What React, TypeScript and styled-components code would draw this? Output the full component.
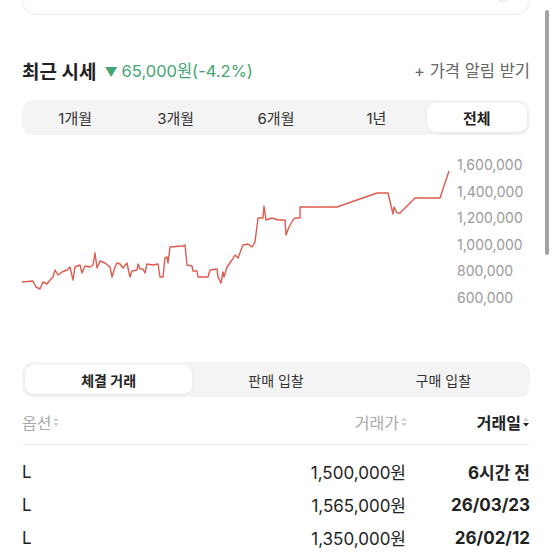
import { createGlobalStyle, styled } from "styled-components";

const GlobalStyle = createGlobalStyle`
  body {
    margin: 0;
    background: #fff;
    font-family: Inter, "Noto Sans CJK KR", sans-serif;
    color: #222;
    overflow: hidden;
  }
`;

const periods = ["1개월", "3개월", "6개월", "1년", "전체"];
const tradeTabs = ["체결 거래", "판매 입찰", "구매 입찰"];
const axis = ["1,600,000", "1,400,000", "1,200,000", "1,000,000", "800,000", "600,000"];

const trades = [
  { option: "L", price: "1,500,000원", date: "6시간 전" },
  { option: "L", price: "1,565,000원", date: "26/03/23" },
  { option: "L", price: "1,350,000원", date: "26/02/12" },
];

/* chart points in page coordinates */
const points: [number, number][] = [
  [22, 282], [33, 281], [36, 287], [40, 289], [43, 282], [47, 284], [50, 280],
  [53, 277], [55, 270], [58, 275], [62, 272], [67, 270], [70, 267], [73, 280],
  [75, 267], [80, 265], [82, 273], [85, 266], [90, 267], [93, 265], [95, 253],
  [97, 268], [100, 261], [105, 263], [110, 267], [112, 277], [115, 267],
  [117, 263], [120, 264], [123, 268], [127, 263], [128, 268], [130, 277],
  [132, 271], [137, 270], [138, 264], [140, 269], [143, 269], [145, 273],
  [147, 264], [153, 265], [158, 264], [160, 277], [163, 277], [165, 258],
  [167, 257], [168, 263], [170, 247], [183, 246], [185, 245], [187, 265],
  [192, 266], [193, 271], [197, 271], [198, 277], [208, 277], [210, 270],
  [217, 269], [218, 277], [221, 283], [223, 272], [224, 277], [227, 267],
  [232, 260], [235, 255], [238, 258], [243, 245], [248, 244], [252, 247],
  [255, 242], [258, 218], [263, 218], [264, 206], [266, 220], [272, 218],
  [278, 220], [285, 220], [286, 235], [289, 227], [293, 220], [295, 218],
  [300, 218], [300, 207], [337, 207], [377, 193], [388, 193], [393, 214],
  [394, 207], [397, 213], [400, 213], [415, 198], [440, 198], [449, 171],
];

const Page = styled.div`
  position: relative;
  padding: 0 23px 0 22px;
`;

const TopCard = styled.div`
  height: 38px;
  margin-top: -25px;
  border: 1px solid #ebebeb;
  border-radius: 14px;
  display: flex;
  justify-content: flex-end;
  padding-right: 17px;
`;

const CardCircle = styled.div`
  width: 16px;
  height: 16px;
  margin-top: 8px;
  border: 1px solid #dcdcdc;
  border-radius: 50%;
`;

const Scrollbar = styled.div`
  position: absolute;
  right: 4px;
  top: 35px;
  width: 4px;
  height: 245px;
  border-radius: 2px;
  background: #a3a3a3;
`;

const HeaderRow = styled.div`
  margin-top: 43px;
  height: 24px;
  display: flex;
  align-items: center;
  justify-content: space-between;
`;

const TitleGroup = styled.div`
  display: flex;
  align-items: center;
  gap: 8px;
`;

const Title = styled.h2`
  margin: 0;
  font-size: 19px;
  font-weight: 700;
  color: #222;
`;

const Change = styled.span`
  font-size: 16.5px;
  color: #45a473;
`;

const Arrow = styled.span`
  font-size: 13px;
  margin-right: 4px;
`;

const AlertLink = styled.span`
  font-size: 16.5px;
  color: #666;
`;

const Segment = styled.div<{ $top: number; $cols: number }>`
  margin-top: ${(p) => p.$top}px;
  height: 35px;
  box-sizing: border-box;
  padding: 3px;
  border-radius: 11px;
  background: #f4f4f4;
  display: grid;
  grid-template-columns: repeat(${(p) => p.$cols}, 1fr);
`;

const SegmentItem = styled.div<{ $active?: boolean; $size: number }>`
  display: flex;
  align-items: center;
  justify-content: center;
  border-radius: 9px;
  font-size: ${(p) => p.$size}px;
  font-weight: ${(p) => (p.$active ? 700 : 400)};
  color: ${(p) => (p.$active ? "#222" : "#333")};
  background: ${(p) => (p.$active ? "#fff" : "transparent")};
  box-shadow: ${(p) => (p.$active ? "0 1px 3px rgba(0,0,0,0.06)" : "none")};
`;

const ChartRow = styled.div`
  margin-top: 10px;
  height: 160px;
  display: flex;
  gap: 5px;
`;

const ChartSvg = styled.svg`
  width: 430px;
  height: 160px;
  flex: none;
`;

const AxisColumn = styled.div`
  padding-top: 7px;
  display: flex;
  flex-direction: column;
`;

const AxisLabel = styled.span`
  height: 26.6px;
  line-height: 26.6px;
  font-size: 14px;
  color: #9a9a9a;
`;

const TableHead = styled.div`
  margin-top: 13px;
  height: 24px;
  display: grid;
  grid-template-columns: 1fr 120px 122px;
  align-items: center;
  padding-bottom: 10px;
  border-bottom: 1px solid #eeeeee;
`;

const HeadCell = styled.div<{ $active?: boolean; $right?: boolean }>`
  display: flex;
  align-items: center;
  justify-content: ${(p) => (p.$right ? "flex-end" : "flex-start")};
  gap: 1px;
  font-size: 16px;
  font-weight: ${(p) => (p.$active ? 700 : 400)};
  color: ${(p) => (p.$active ? "#222" : "#aaa")};
`;

const TableBody = styled.div`
  padding-top: 10px;
`;

const Row = styled.div`
  height: 33px;
  display: grid;
  grid-template-columns: 1fr 120px 122px;
  align-items: center;
  font-size: 17px;
  color: #222;
`;

const Cell = styled.div<{ $bold?: boolean; $right?: boolean }>`
  text-align: ${(p) => (p.$right ? "right" : "left")};
  font-weight: ${(p) => (p.$bold ? 700 : 400)};
`;

const PriceCell = styled(Cell)`
  padding-right: 2px;
`;

const SortIcon = ({ active }: { active?: boolean }) => (
  <svg width="8" height="12" viewBox="0 0 8 12">
    <path d="M4 1.5 L7 5 H1 Z" fill={active ? "#d0d0d0" : "#d4d4d4"} />
    <path d="M4 10.5 L7 7 H1 Z" fill={active ? "#222" : "#d4d4d4"} />
  </svg>
);

const App = () => {
  const d = points
    .map(([x, y], i) => `${i === 0 ? "M" : "L"}${x - 22} ${y - 145}`)
    .join(" ");

  return (
    <>
      <GlobalStyle />
      <Page>
        <TopCard>
          <CardCircle />
        </TopCard>
        <Scrollbar />

        <HeaderRow>
          <TitleGroup>
            <Title>최근 시세</Title>
            <Change>
              <Arrow>▼</Arrow>65,000원(-4.2%)
            </Change>
          </TitleGroup>
          <AlertLink>+ 가격 알림 받기</AlertLink>
        </HeaderRow>

        <Segment $top={18} $cols={periods.length}>
          {periods.map((p) => (
            <SegmentItem key={p} $size={15} $active={p === "전체"}>
              {p}
            </SegmentItem>
          ))}
        </Segment>

        <ChartRow>
          <ChartSvg viewBox="0 0 430 160">
            <path d={d} fill="none" stroke="#df5a4e" strokeWidth="1.4" strokeLinejoin="round" />
          </ChartSvg>
          <AxisColumn>
            {axis.map((a) => (
              <AxisLabel key={a}>{a}</AxisLabel>
            ))}
          </AxisColumn>
        </ChartRow>

        <Segment $top={57} $cols={tradeTabs.length}>
          {tradeTabs.map((t) => (
            <SegmentItem key={t} $size={14} $active={t === "체결 거래"}>
              {t}
            </SegmentItem>
          ))}
        </Segment>

        <TableHead>
          <HeadCell>
            옵션
            <SortIcon />
          </HeadCell>
          <HeadCell $right>
            거래가
            <SortIcon />
          </HeadCell>
          <HeadCell $right $active>
            거래일
            <SortIcon active />
          </HeadCell>
        </TableHead>

        <TableBody>
          {trades.map((t) => (
            <Row key={t.date}>
              <Cell>{t.option}</Cell>
              <PriceCell $right>{t.price}</PriceCell>
              <Cell $right $bold>
                {t.date}
              </Cell>
            </Row>
          ))}
        </TableBody>
      </Page>
    </>
  );
};

export default App;
